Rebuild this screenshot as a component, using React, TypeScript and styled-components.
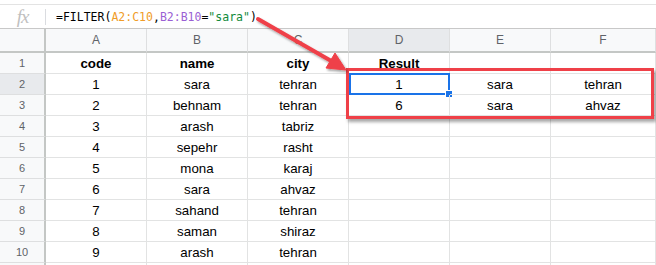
import { Fragment } from "react";
import styled, { createGlobalStyle } from "styled-components";

const GlobalStyle = createGlobalStyle`
  html, body {
    margin: 0;
    padding: 0;
    background: #ffffff;
    overflow: hidden;
  }
  body {
    font-family: "Liberation Sans", Arial, sans-serif;
  }
`;

const Page = styled.div`
  position: relative;
  width: 656px;
  height: 265px;
  overflow: hidden;
  background: #fff;
`;

const FormulaBar = styled.div`
  margin-top: 4px;
  height: 23px;
  border-top: 1px solid #e3e3e3;
  border-bottom: 1px solid #c8c8c8;
  display: flex;
  align-items: center;
`;

const FxBox = styled.div`
  width: 45px;
  height: 16px;
  border-right: 1px solid #dadce0;
  display: flex;
  align-items: center;
  justify-content: center;
  font-family: "Liberation Serif", "DejaVu Serif", serif;
  font-style: italic;
  font-size: 19px;
  color: #c0c0c0;
  letter-spacing: -1px;
`;

const Formula = styled.div`
  padding-left: 10px;
  font-family: "DejaVu Sans Mono", "Liberation Mono", monospace;
  font-size: 11.5px;
  color: #000;
  white-space: pre;
`;

const Token = styled.span<{ $tone?: "range1" | "range2" | "str" }>`
  color: ${(p) =>
    p.$tone === "range1"
      ? "#f09c28"
      : p.$tone === "range2"
      ? "#9a5fd4"
      : p.$tone === "str"
      ? "#118a3a"
      : "#000"};
`;

const Sheet = styled.div`
  display: grid;
  grid-template-columns: 46px repeat(5, 101px) 105px;
  grid-template-rows: 24px;
  grid-auto-rows: 21px;
`;

const ColHead = styled.div<{ $active?: boolean }>`
  box-sizing: border-box;
  background: ${(p) => (p.$active ? "#e8eaed" : "#f8f9fa")};
  border-right: 1px solid #dedfe0;
  border-bottom: 2px solid #c4c7c5;
  display: flex;
  align-items: center;
  justify-content: center;
  font-size: 12px;
  color: #5f6368;
`;

const Corner = styled(ColHead)`
  border-right: 2px solid #c4c7c5;
`;

const RowHead = styled.div<{ $active?: boolean }>`
  box-sizing: border-box;
  background: ${(p) => (p.$active ? "#e8eaed" : "#f8f9fa")};
  border-right: 2px solid #c4c7c5;
  border-bottom: 1px solid #dedfe0;
  display: flex;
  align-items: center;
  justify-content: center;
  font-size: 11px;
  color: #5f6368;
`;

const Cell = styled.div<{ $bold?: boolean; $selected?: boolean }>`
  position: relative;
  box-sizing: border-box;
  border-right: 1px solid #e2e3e3;
  border-bottom: 1px solid #e2e3e3;
  display: flex;
  align-items: center;
  justify-content: center;
  font-size: 13.3px;
  font-weight: ${(p) => (p.$bold ? 700 : 400)};
  color: #000;
  white-space: nowrap;
  ${(p) =>
    p.$selected &&
    `
    &::before {
      content: "";
      position: absolute;
      left: 0;
      top: -1px;
      right: -1px;
      bottom: -1px;
      border: 2px solid #1a73e8;
    }
    &::after {
      content: "";
      position: absolute;
      right: -4px;
      bottom: -4px;
      width: 6px;
      height: 6px;
      background: #1a73e8;
      border: 1px solid #fff;
    }
  `}
`;

const Highlight = styled.div`
  position: absolute;
  left: 346px;
  top: 68px;
  width: 308px;
  height: 51px;
  box-sizing: border-box;
  border: 3px solid #ef4048;
  box-shadow: 2px 3px 3px rgba(0, 0, 0, 0.35);
  pointer-events: none;
`;

const ArrowLayer = styled.svg`
  position: absolute;
  left: 0;
  top: 0;
  pointer-events: none;
`;

const columns = ["A", "B", "C", "D", "E", "F"];

const rows: string[][] = [
  ["code", "name", "city", "Result", "", ""],
  ["1", "sara", "tehran", "1", "sara", "tehran"],
  ["2", "behnam", "tehran", "6", "sara", "ahvaz"],
  ["3", "arash", "tabriz", "", "", ""],
  ["4", "sepehr", "rasht", "", "", ""],
  ["5", "mona", "karaj", "", "", ""],
  ["6", "sara", "ahvaz", "", "", ""],
  ["7", "sahand", "tehran", "", "", ""],
  ["8", "saman", "shiraz", "", "", ""],
  ["9", "arash", "tehran", "", "", ""],
  ["", "", "", "", "", ""],
];

// only the top edge of row 11 shows, its number falls below the window
const visibleRows = 10;

const Arrow = () => (
  <ArrowLayer width="656" height="265" viewBox="0 0 656 265">
    <defs>
      <filter id="sh" x="-20%" y="-20%" width="140%" height="140%">
        <feDropShadow dx="1.5" dy="2" stdDeviation="1.2" floodColor="#000" floodOpacity="0.35" />
      </filter>
    </defs>
    <g filter="url(#sh)" fill="#ef4048" stroke="#ef4048">
      <line x1="258" y1="19" x2="333" y2="62" strokeWidth="4" strokeLinecap="round" />
      <polygon points="346,70 326,68 335,53" strokeWidth="1" strokeLinejoin="round" />
    </g>
  </ArrowLayer>
);

export default function App() {
  return (
    <Page>
      <GlobalStyle />
      <FormulaBar>
        <FxBox>fx</FxBox>
        <Formula>
          <Token>=FILTER(</Token>
          <Token $tone="range1">A2:C10</Token>
          <Token>,</Token>
          <Token $tone="range2">B2:B10</Token>
          <Token>=</Token>
          <Token $tone="str">"sara"</Token>
          <Token>)</Token>
        </Formula>
      </FormulaBar>
      <Sheet>
        <Corner />
        {columns.map((c) => (
          <ColHead key={c} $active={c === "D"}>
            {c}
          </ColHead>
        ))}
        {rows.map((r, i) => (
          <Fragment key={i}>
            <RowHead $active={i === 1}>{i < visibleRows ? i + 1 : ""}</RowHead>
            {r.map((v, j) => (
              <Cell key={j} $bold={i === 0} $selected={i === 1 && j === 3}>
                {v}
              </Cell>
            ))}
          </Fragment>
        ))}
      </Sheet>
      <Highlight />
      <Arrow />
    </Page>
  );
}
